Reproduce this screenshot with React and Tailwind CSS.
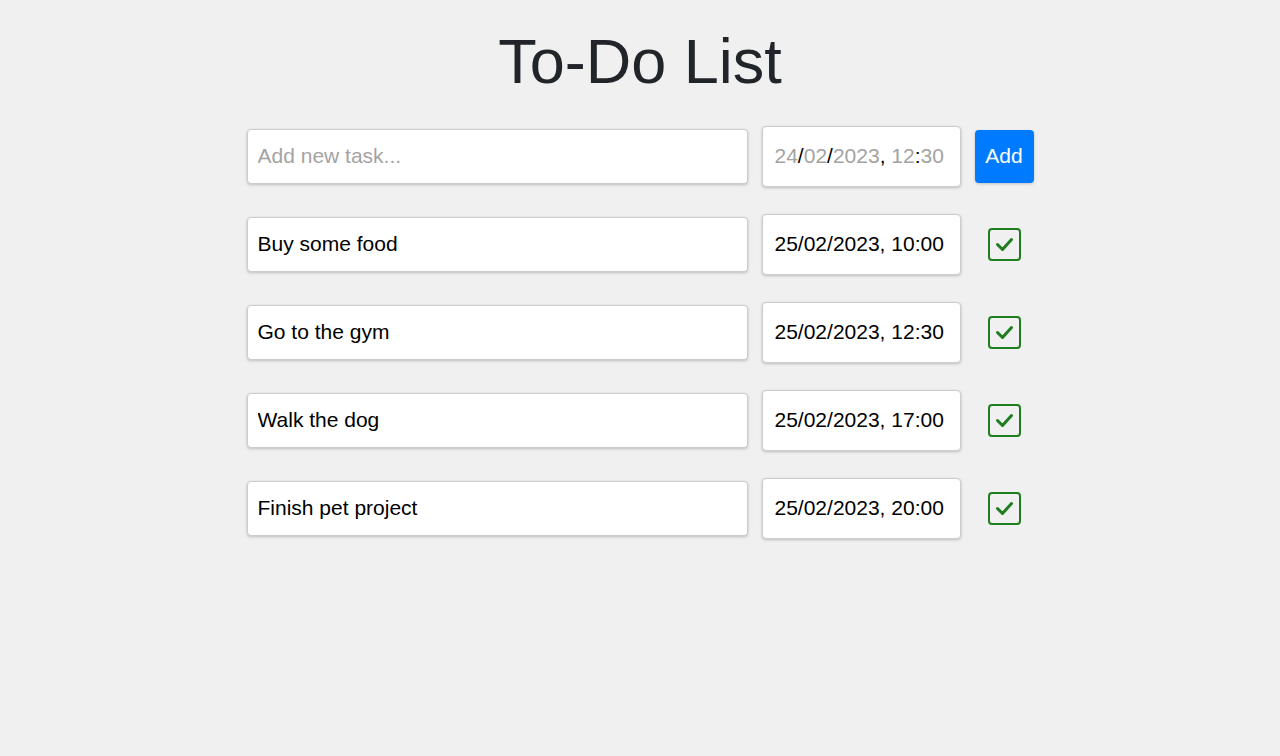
import React from 'react';

const tasks = [
  { text: 'Buy some food', date: '25/02/2023, 10:00' },
  { text: 'Go to the gym', date: '25/02/2023, 12:30' },
  { text: 'Walk the dog', date: '25/02/2023, 17:00' },
  { text: 'Finish pet project', date: '25/02/2023, 20:00' },
];

const CheckIcon = () => (
  <svg width="33" height="33" viewBox="0 0 33 33" fill="none">
    <rect x="1" y="1" width="31" height="31" rx="3" stroke="#1e7d1e" strokeWidth="2" />
    <path d="M9.5 16.5 L14.5 21.5 L23.5 11.5" stroke="#1e7d1e" strokeWidth="3" strokeLinecap="round" strokeLinejoin="round" />
  </svg>
);

const boxCls =
  'bg-white border border-[#cccccc] rounded-[4px] shadow-[0_1px_3px_rgba(0,0,0,0.22)] text-[21px] text-black';

export default function App() {
  return (
    <div className="min-h-[756px] w-full bg-[#f0f0f0] font-['Liberation_Sans',Arial,sans-serif]">
      <h1 className="pt-[30px] text-center text-[63px] leading-none text-[#212529]">To-Do List</h1>

      <div className="mx-auto mt-[33px] grid w-[787px] grid-cols-[501px_199px_59px] items-center gap-x-[14px] gap-y-[27px]">
        {/* Nueva tarea */}
        <input
          className={`${boxCls} h-[55px] px-[10px] pb-[2px] outline-none placeholder:text-[#a3a3a3]`}
          placeholder="Add new task..."
        />
        <div className={`${boxCls} flex h-[61px] items-center px-[12px] pb-[2px]`}>
          <span className="text-[#a3a3a3]">24</span>/<span className="text-[#a3a3a3]">02</span>/
          <span className="text-[#a3a3a3]">2023</span>,&nbsp;<span className="text-[#a3a3a3]">12</span>:
          <span className="text-[#a3a3a3]">30</span>
        </div>
        <button className="h-[53px] rounded-[4px] bg-[#007bff] pb-[2px] text-[21px] text-white shadow-[0_1px_3px_rgba(0,0,0,0.2)]">
          Add
        </button>

        {tasks.map((t) => (
          <React.Fragment key={t.text}>
            <input readOnly value={t.text} className={`${boxCls} h-[55px] px-[10px] pb-[2px] outline-none`} />
            <div className={`${boxCls} flex h-[61px] items-center px-[12px] pb-[2px]`}>{t.date}</div>
            <div className="flex justify-center">
              <CheckIcon />
            </div>
          </React.Fragment>
        ))}
      </div>
    </div>
  );
}
